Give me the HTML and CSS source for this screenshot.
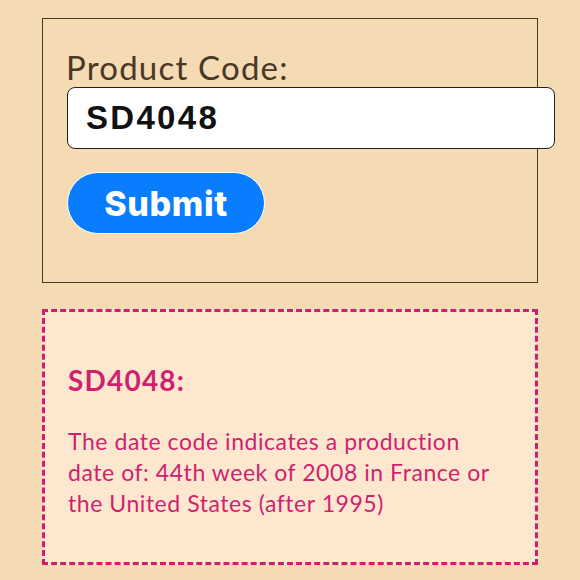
FILE: index.html
```html
<!DOCTYPE html>
<html lang="en">
<head>
<meta charset="utf-8">
<title>Product Code</title>
<link rel="stylesheet" href="styles.css">
</head>
<body>
<main class="page">
  <form class="lookup">
    <label class="lookup-label" for="code">Product Code:</label>
    <input class="lookup-input" id="code" type="text" value="SD4048">
    <button class="lookup-submit" type="button">Submit</button>
  </form>
  <section class="result">
    <h2 class="result-title">SD4048:</h2>
    <p class="result-text">The date code indicates a production date of: 44th week of 2008 in France or the United States (after 1995)</p>
  </section>
</main>
</body>
</html>
```

FILE: styles.css
```css
html, body {
  margin: 0;
  padding: 0;
  background: #f5dbb3;
}
body {
  font-family: Lato, "Open Sans", sans-serif;
}
.page {
  width: 496px;
  padding: 18px 0 0 42px;
  display: flex;
  flex-direction: column;
  gap: 26px;
}
.lookup {
  border: 1.5px solid #4a3826;
  padding: 28px 23px 46px 23px;
  height: 265px;
  box-sizing: border-box;
  display: flex;
  flex-direction: column;
  align-items: flex-start;
}
.lookup-label {
  font-size: 33px;
  line-height: 40px;
  letter-spacing: 1.2px;
  color: #4a3826;
}
.lookup-input {
  width: 100%;
  box-sizing: content-box;
  padding: 0 20px 0 18px;
  margin: 0 0 0 1px;
  border: 1.5px solid #222;
  border-radius: 8px;
  background: #fff;
  font-family: "Liberation Sans", Arial, sans-serif;
  font-weight: 700;
  font-size: 33px;
  letter-spacing: 2.3px;
  color: #111;
  outline: none;
  height: 60px;
}
.lookup-submit {
  margin: 23px 0 0 1px;
  width: 198px;
  height: 62px;
  border: 1.5px solid #fff;
  border-radius: 31px;
  background: #0a7dff;
  color: #fff;
  font-family: Inter, "Liberation Sans", sans-serif;
  font-weight: 800;
  font-size: 34px;
  letter-spacing: 0.6px;
  padding: 0;
}
.result {
  border: 3px dashed #d11f70;
  background: #fde8cf;
  height: 256px;
  box-sizing: border-box;
  padding: 52px 23px 0 23px;
  color: #d11f70;
}
.result-title {
  margin: 0;
  font-size: 28px;
  font-weight: 700;
  line-height: 32px;
  letter-spacing: 1.2px;
}
.result-text {
  margin: 30px 0 0 0;
  font-size: 23px;
  line-height: 31px;
  letter-spacing: 0.55px;
  max-width: 430px;
}
```
